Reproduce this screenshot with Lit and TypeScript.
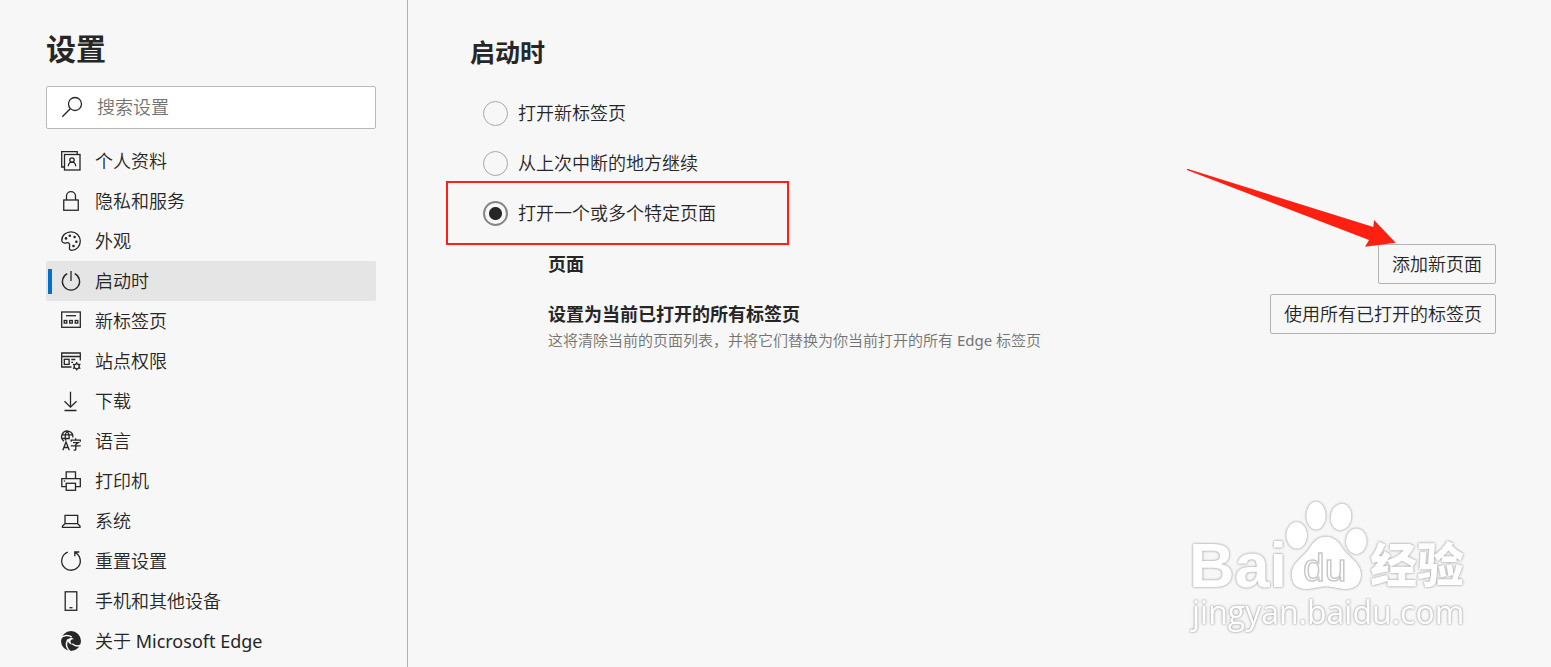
import { LitElement, html, svg, css } from "lit";
import { customElement, state } from "lit/decorators.js";
import { classMap } from "lit/directives/class-map.js";

interface NavItem {
  id: string;
  label: unknown;
  icon: unknown;
}

const NAV: NavItem[] = [
  {
    id: "profiles",
    label: "个人资料",
    icon: svg`<path d="M3.500 16H.7V.7h15.500v2.800" /><rect x="3.500" y="3.500" width="15.500" height="15.500" />
      <circle cx="11" cy="9" r="2.200" /><path d="M7.300 15.300c.2-2.800 1.700-4.100 3.700-4.100s3.500 1.300 3.700 4.100" />`,
  },
  {
    id: "privacy",
    label: "隐私和服务",
    icon: svg`<rect x="2.750" y="9" width="14.500" height="10.250" /><path d="M5.500 9V5a4.500 4.300 0 0 1 9 0v4" />`,
  },
  {
    id: "appearance",
    label: "外观",
    icon: svg`<path d="M.8 9.500C.6 4.500 5 .8 10 .8c5.200 0 9.300 4 9.300 9.200 0 5.300-3.900 9.300-8.300 9.300-1.800 0-2.900-.8-2.600-2.600.3-1.700.8-3.300-.4-4.500C6.500 10.800 5.200 12.600 3 12 1.500 11.500.9 10.800.8 9.500Z" />
      <g class="solid"><circle cx="5" cy="7.400" r="1.300" /><circle cx="8.800" cy="4.700" r="1.300" /><circle cx="13.600" cy="6" r="1.300" /><circle cx="15.400" cy="10.800" r="1.300" /><circle cx="12.500" cy="15" r="1.300" /></g>`,
  },
  {
    id: "startup",
    label: "启动时",
    icon: svg`<path d="M6.300 2.700a8.600 8.600 0 1 0 7.400 0M10 0v10" />`,
  },
  {
    id: "newtab",
    label: "新标签页",
    icon: svg`<rect x=".7" y="1" width="18.600" height="15.300" /><path d="M5 4.700h10" />
      <rect x="3.200" y="9.500" width="2.600" height="2.600" /><rect x="8.700" y="9.500" width="2.600" height="2.600" /><rect x="14.200" y="9.500" width="2.600" height="2.600" />`,
  },
  {
    id: "permissions",
    label: "站点权限",
    icon: svg`<path d="M10.500 16H.7V2h18.600v7.500M.7 5.500h18.600" /><rect x="3.300" y="8.300" width="4.800" height="5.100" />
      <path d="M10.300 8.500h4M10.300 11.300h1.700" /><circle cx="15.700" cy="15.300" r="2.500" />
      <path d="M15.700 11v1.800M15.700 17.800v1.800M12 13.100l1.500.9M17.900 16.600l1.500.9M12 17.500l1.500-.9M17.900 14l1.500-.9" />`,
  },
  {
    id: "downloads",
    label: "下载",
    icon: svg`<path d="M9.500.8v15M3.500 10.200l6 6 6-6M3.500 19.500h12" />`,
  },
  {
    id: "languages",
    label: "语言",
    icon: svg`<path d="M3 10.200A5.600 5.600 0 1 1 11.800 6.500M1 3.800h10.300M.8 7.500h8M5 9.500C3.500 7 4 2.500 6 .6c1.800 1.600 2.300 4 2.200 7" />
      <path d="M1.800 19.300 5 11l3.300 8.300M2.900 16.500h4.300" />
      <path d="M10.200 10.700V9.200h9.100v1.500M14.700 7.300v1.900M12 11.600h5.300l-2.500 2v4.800c0 .7-.5.9-2.200.8M9.800 14.800h9.900" />`,
  },
  {
    id: "printers",
    label: "打印机",
    icon: svg`<path d="M5.200 7.700V.8h9.300v6.900M5.200 15.700H.8v-8h18.500v8h-4.800" /><rect x="5.200" y="12.300" width="9.300" height="7" /><path d="M2.800 10h1.400" />`,
  },
  {
    id: "system",
    label: "系统",
    icon: svg`<path d="M4 12.700V4.300h12.700v8.400M4 12.700h12.700l2.300 2.300v1.300H1.500V15z" />`,
  },
  {
    id: "reset",
    label: "重置设置",
    icon: svg`<path d="M6.800 1.200A9.300 9.300 0 1 0 14.300 1.700M13.800 5.300V1h4.500" />`,
  },
  {
    id: "devices",
    label: "手机和其他设备",
    icon: svg`<rect x="4.200" y=".8" width="11.600" height="18.500" /><path d="M8.500 16.700h3" />`,
  },
  {
    id: "about",
    label: html`关于 <span class="latin">Microsoft Edge</span>`,
    icon: svg`<circle class="fill" cx="10" cy="10" r="10" />
      <path class="swirl" d="M-.5 7.200C2.500 4.200 7.500 3.600 10.800 6.200M20.500 13.600c-3 1.900-6.600 1.700-9.200-.8M9.300 20.500C5.300 17.300 4.500 12.800 6.800 8.300" />
      <path class="gap" d="M6.800 8.800C8 6.700 11.500 6.500 13 8.300c-1.300-.3-3.200.2-3.500 1.900-.2 1.300.8 2.600 2.300 3.200-2.800.5-5.300-1.800-5-4.600Z" />`,
  },
];

const STARTUP = ["打开新标签页", "从上次中断的地方继续", "打开一个或多个特定页面"];

@customElement("app-root")
export class AppRoot extends LitElement {
  @state() private current = "startup";
  @state() private choice = 2;

  static styles = css`
    :host {
      display: flex;
      min-height: 100vh;
      background: #f7f7f7;
      color: #262626;
      font: 350 18px/24px "Noto Sans", "Noto Sans CJK SC", sans-serif;
    }
    * {
      box-sizing: border-box;
    }
    h1,
    h2,
    h3,
    p {
      margin: 0;
    }
    .sidebar {
      flex: 0 0 408px;
      padding: 29px 31px 6px 46px;
      border-right: 1px solid #b0b0b0;
    }
    h1 {
      font-size: 30px;
      line-height: 40px;
      font-weight: 700;
    }
    .search {
      display: flex;
      align-items: center;
      gap: 15px;
      height: 43px;
      margin: 17px 0 12px;
      padding: 0 15px 2px;
      background: #fff;
      border: 1px solid #b9b9b9;
      border-radius: 2px;
    }
    .search input {
      flex: 1;
      min-width: 0;
      border: 0;
      padding: 0;
      outline: 0;
      background: none;
      font: inherit;
      color: inherit;
    }
    .search input::placeholder {
      color: #737373;
    }
    .icon {
      flex: none;
      width: 20px;
      height: 20px;
      fill: none;
      stroke: #262626;
      stroke-width: 1.3;
      overflow: visible;
    }
    .icon .solid,
    .icon .fill {
      fill: #262626;
      stroke: none;
    }
    .icon .swirl {
      stroke: #f7f7f7;
      stroke-width: 1.5;
    }
    .icon .gap {
      fill: #f7f7f7;
      stroke: none;
    }
    .item {
      display: flex;
      align-items: center;
      gap: 14px;
      height: 40px;
      padding-left: 15px;
      border-radius: 2px;
      color: inherit;
      text-decoration: none;
      white-space: nowrap;
    }
    .item.current {
      background: linear-gradient(#0070c9, #0070c9) 2px 8px / 4px 25px no-repeat #e5e5e5;
    }
    .latin {
      font-weight: 400;
    }
    main {
      position: relative;
      flex: 1;
      min-width: 0;
      padding: 35px 55px 0 62px;
    }
    h2 {
      font-size: 25px;
      line-height: 34px;
      font-weight: 700;
    }
    .options {
      display: flex;
      flex-direction: column;
      align-items: flex-start;
      margin: 19px 0 0;
      padding: 0 0 0 13px;
      border: 0;
    }
    .option {
      position: relative;
      display: flex;
      align-items: center;
      gap: 10px;
      height: 50px;
    }
    .option input {
      appearance: none;
      width: 25px;
      height: 25px;
      margin: 0;
      border: 1px solid #a8a8a8;
      border-radius: 50%;
    }
    .option input:checked {
      border: 2px solid #868686;
      background: radial-gradient(circle, #262626 6px, transparent 7px);
    }
    .marker {
      position: absolute;
      top: -7px;
      left: -37px;
      width: 343px;
      height: 64px;
      border: 2px solid #ff2012;
      pointer-events: none;
    }
    .row {
      display: flex;
      justify-content: space-between;
      align-items: flex-start;
      min-height: 50px;
      padding: 6px 0 0 78px;
    }
    h3 {
      font-size: 18px;
      line-height: 24px;
      font-weight: 700;
      padding-top: 8px;
    }
    .hint {
      font-size: 15px;
      line-height: 20px;
      margin-top: 4px;
      color: #737373;
    }
    .action {
      position: relative;
      flex: none;
    }
    button {
      height: 40px;
      padding: 0 13px;
      border: 1px solid #b3b3b3;
      border-radius: 2px;
      background: none;
      color: inherit;
      font: inherit;
    }
    .arrow {
      position: absolute;
      top: -75px;
      right: 99px;
      width: 210px;
      height: 79px;
      fill: #ff2012;
      pointer-events: none;
    }
    .watermark {
      position: absolute;
      right: 71px;
      bottom: 27px;
      width: 300px;
      height: 150px;
      fill: #fff;
      filter: drop-shadow(0 0 1px #999) drop-shadow(0 0 1px #ddd);
      pointer-events: none;
    }
    .brand {
      font: 700 63px "Liberation Sans", sans-serif;
    }
    .du {
      font: 400 39px "Liberation Sans", sans-serif;
      stroke: #c8c8c8;
      stroke-width: 1.5;
    }
    .cjk {
      font: 900 47px "Noto Sans CJK SC", sans-serif;
    }
    .site {
      font: 400 32px "Open Sans", sans-serif;
    }
  `;

  render() {
    return html`
      <aside class="sidebar">
        <h1>设置</h1>
        <label class="search">
          <svg class="icon" viewBox="0 0 20 20" aria-hidden="true">
            <circle cx="13" cy="7" r="6.500" />
            <path d="M8.300 11.800.3 19.800" />
          </svg>
          <input type="search" placeholder="搜索设置" aria-label="搜索设置" />
        </label>
        <nav>
          ${NAV.map(
            (n) => html`<a
              href="#${n.id}"
              class=${classMap({ item: true, current: n.id === this.current })}
              @click=${() => (this.current = n.id)}
              ><svg class="icon" viewBox="0 0 20 20" aria-hidden="true">${n.icon}</svg
              ><span>${n.label}</span></a
            >`
          )}
        </nav>
      </aside>
      <main>
        <h2>启动时</h2>
        <fieldset class="options" aria-label="启动时">
          ${STARTUP.map(
            (text, i) => html`<label class="option">
              <input
                type="radio"
                name="startup"
                .checked=${i === this.choice}
                @change=${() => (this.choice = i)}
              />
              <span>${text}</span>
              ${i === 2 ? html`<span class="marker"></span>` : null}
            </label>`
          )}
        </fieldset>
        <section class="row">
          <h3>页面</h3>
          <div class="action">
            <button type="button">添加新页面</button>
            <svg class="arrow" viewBox="0 0 210 79" aria-hidden="true">
              <path d="M0 0v1L182 71 178 77.700 208.700 73.700 187 51 186.300 58 1 0Z" />
            </svg>
          </div>
        </section>
        <section class="row">
          <div>
            <h3>设置为当前已打开的所有标签页</h3>
            <p class="hint">
              这将清除当前的页面列表，并将它们替换为你当前打开的所有 <span class="latin">Edge</span> 标签页
            </p>
          </div>
          <div class="action"><button type="button">使用所有已打开的标签页</button></div>
        </section>
        <svg class="watermark" viewBox="0 0 300 150">
          <text class="brand" x="9" y="97">Bai</text>
          <ellipse cx="116.700" cy="45.300" rx="10.300" ry="13.300" />
          <ellipse cx="136" cy="25.700" rx="9.700" ry="14" />
          <ellipse cx="161" cy="27" rx="10.300" ry="13.300" transform="rotate(8 161 27)" />
          <ellipse cx="176.300" cy="51.300" rx="10.300" ry="12.700" />
          <path
            d="M146 46.700c9 0 13 6 17 12 6 9 18 14 18 26 0 9-6 14.300-15 14.300-8 0-12-2.500-20-2.500s-12 2.500-20 2.500c-9 0-14.300-5.300-14.300-14.300 0-12 11.300-17 17.300-26 4-6 8-12 17-12Z"
          />
          <text class="du" x="123" y="91">du</text>
          <text class="cjk" x="190" y="92">经验</text>
          <text class="site" x="12" y="134">jingyan.baidu.com</text>
        </svg>
      </main>
    `;
  }
}
